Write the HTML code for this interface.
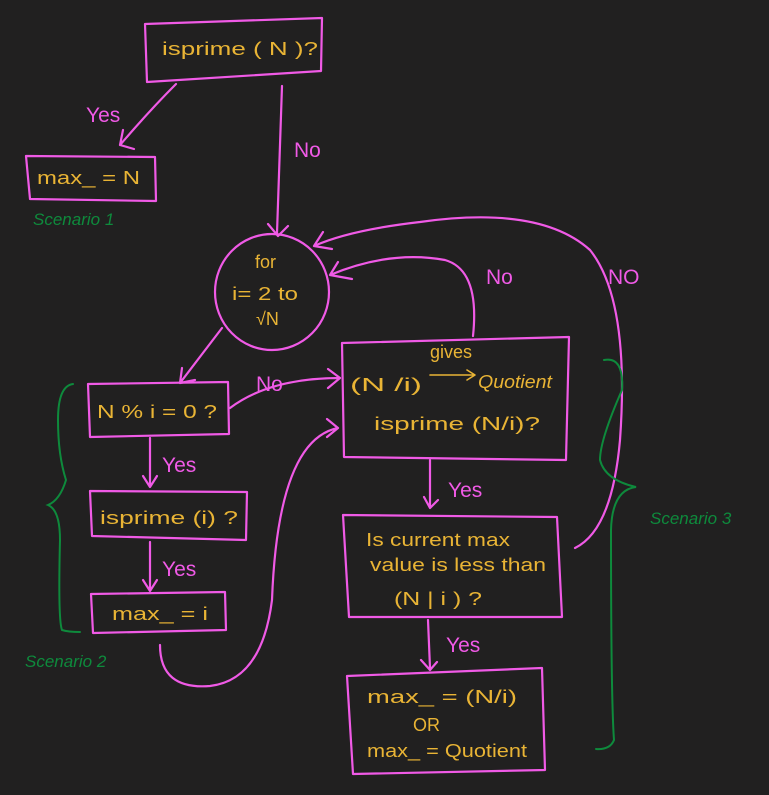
<!DOCTYPE html>
<html><head><meta charset="utf-8"><style>
html,body{margin:0;padding:0;background:#212020;}
svg{display:block}
text{font-family:"Liberation Sans",sans-serif;}
.p{fill:none;stroke:#f05ae6;stroke-width:2.2;stroke-linecap:round;stroke-linejoin:round}
.g{fill:none;stroke:#0e8a3c;stroke-width:2;stroke-linecap:round}
.y{fill:#e9b435;font-size:18px}
.pt{fill:#f05ae6;font-size:21px}
.gt{fill:#0e8a3c;font-size:17px;font-style:italic}
</style></head><body>
<svg width="769" height="795" viewBox="0 0 769 795">
<rect width="769" height="795" fill="#212020"/>
<path class="p" d="M145 24 L322 18 L321 71 L147 82 Z"/>
<text class="y" x="162" y="55" font-size="21" textLength="156" lengthAdjust="spacingAndGlyphs">isprime ( N )?</text>
<path class="p" d="M176 84 Q150 110 120 145 M120 145 L123 130 M120 145 L134 149"/>
<text class="pt" x="86" y="122" font-size="23">Yes</text>
<path class="p" d="M26 156 L155 157 L156 201 L30 199 Z"/>
<text class="y" x="37" y="184" font-size="18" textLength="103" lengthAdjust="spacingAndGlyphs">max_ =  N</text>
<text class="gt" x="33" y="225">Scenario 1</text>
<path class="p" d="M282 86 L277 233 M268 224 L278 236 L288 226"/>
<text class="pt" x="294" y="157" font-size="22">No</text>
<ellipse class="p" cx="272" cy="292" rx="57" ry="58"/>
<text class="y" x="255" y="268" font-size="19">for</text>
<text class="y" x="232" y="300" font-size="20" textLength="66" lengthAdjust="spacingAndGlyphs">i= 2 to</text>
<text class="y" x="256" y="325" font-size="18">√N</text>
<path class="p" d="M575 548 Q612 530 620 440 Q630 300 590 250 Q540 205 420 222 Q350 230 314 246 M314 246 L323 232 M314 246 L332 249"/>
<path class="p" d="M473 336 Q480 270 445 260 Q390 250 330 275 M330 275 L338 262 M330 275 L352 279"/>
<text class="pt" x="486" y="284" font-size="22">No</text>
<text class="pt" x="608" y="284" font-size="20">NO</text>
<path class="p" d="M222 328 L180 383 M180 383 L182 368 M180 383 L195 380"/>
<path class="p" d="M88 384 L228 382 L229 434 L90 437 Z"/>
<text class="y" x="97" y="418" font-size="20" textLength="120" lengthAdjust="spacingAndGlyphs">N % i = 0 ?</text>
<path class="p" d="M230 408 Q270 378 340 378 M328 369 L340 378 L328 388"/>
<text class="pt" x="256" y="391">No</text>
<path class="p" d="M150 438 L150 485 M143 476 L150 487 L157 476"/>
<text class="pt" x="162" y="472">Yes</text>
<path class="p" d="M90 491 L247 492 L246 540 L92 536 Z"/>
<text class="y" x="100" y="524" font-size="19" textLength="138" lengthAdjust="spacingAndGlyphs">isprime (i) ?</text>
<path class="p" d="M150 542 L150 588 M143 580 L150 591 L157 580"/>
<text class="pt" x="162" y="576">Yes</text>
<path class="p" d="M91 594 L225 592 L226 630 L93 633 Z"/>
<text class="y" x="112" y="620" font-size="19" textLength="96" lengthAdjust="spacingAndGlyphs">max_  = i</text>
<path class="p" d="M160 645 Q160 690 210 686 Q262 680 272 600 Q278 440 338 428 M327 419 L338 428 L327 437"/>
<path class="p" d="M342 343 L569 337 L566 460 L344 457 Z"/>
<text class="y" x="350" y="391" font-size="24" textLength="72" lengthAdjust="spacingAndGlyphs">(N /i)</text>
<text class="y" x="430" y="358" font-size="13">gives</text>
<path class="p" style="stroke:#e9b435;stroke-width:1.6" d="M430 375 L474 375 M467 370 L475 375 L467 380"/>
<text class="y" x="478" y="388" font-style="italic" font-size="20" textLength="74" lengthAdjust="spacingAndGlyphs">Quotient</text>
<text class="y" x="374" y="430" font-size="21" textLength="166" lengthAdjust="spacingAndGlyphs">isprime (N/i)?</text>
<path class="p" d="M430 460 L430 505 M424 497 L430 508 L438 500"/>
<text class="pt" x="448" y="497" font-size="22">Yes</text>
<path class="p" d="M343 515 L557 517 L562 617 L349 617 Z"/>
<text class="y" x="366" y="546" font-size="17" textLength="144" lengthAdjust="spacingAndGlyphs">Is  current max</text>
<text class="y" x="370" y="571" font-size="17" textLength="176" lengthAdjust="spacingAndGlyphs">value  is  less  than</text>
<text class="y" x="394" y="605" font-size="20" textLength="88" lengthAdjust="spacingAndGlyphs">(N | i ) ?</text>
<path class="p" d="M428 620 L430 668 M421 660 L430 670 L437 662"/>
<text class="pt" x="446" y="652" font-size="22">Yes</text>
<path class="p" d="M347 676 L542 668 L545 770 L353 774 Z"/>
<text class="y" x="367" y="703" font-size="19" textLength="150" lengthAdjust="spacingAndGlyphs">max_ = (N/i)</text>
<text class="y" x="413" y="731" font-size="17">OR</text>
<text class="y" x="367" y="757" font-size="17" textLength="160" lengthAdjust="spacingAndGlyphs">max_ = Quotient</text>
<path class="g" d="M73 384 Q58 386 58 420 Q58 455 66 480 Q60 500 48 505 Q60 510 60 540 Q58 620 62 630 Q68 632 80 632"/>
<path class="g" d="M604 360 Q624 356 622 390 Q600 440 600 460 Q605 480 636 487 Q612 490 611 530 Q611 700 614 740 Q610 750 596 749"/>
<text class="gt" x="25" y="667" font-size="18">Scenario 2</text>
<text class="gt" x="650" y="524" font-size="19">Scenario 3</text>
</svg>
</body></html>
